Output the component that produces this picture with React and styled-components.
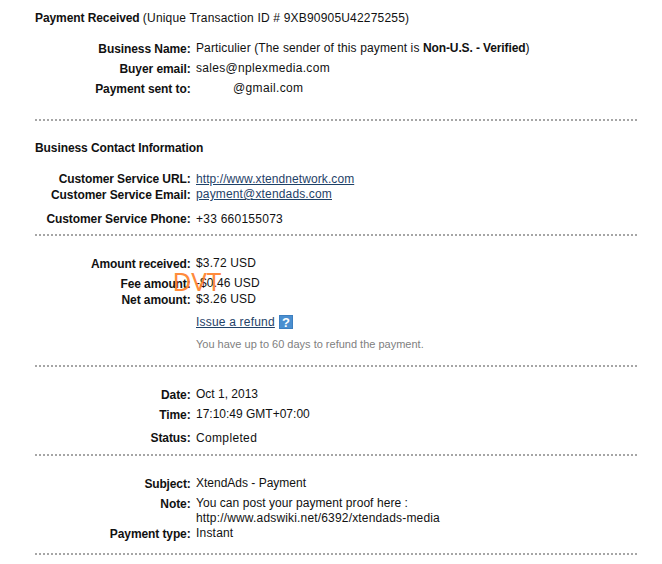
import styled, { createGlobalStyle } from 'styled-components';

const GlobalStyle = createGlobalStyle`
  body {
    margin: 0;
    background: #fff;
    color: #111;
    font: 12px/15px "Liberation Sans", Arial, sans-serif;
  }
`;

const Page = styled.main`
  display: flex;
  flex-direction: column;
  box-sizing: border-box;
  width: 662px;
  height: 564px;
  padding: 11px 25px 0 35px;
  overflow: hidden;
`;

const Strong = styled.b`
  letter-spacing: -0.12px;
`;

const Wide = styled.span`
  letter-spacing: 0.17px;
`;

const Heading = styled.h2`
  height: 15px;
  margin: ${(p) => p.$top || 0}px 0 0;
  font-size: 12px;
  font-weight: 700;
  letter-spacing: -0.09px;
`;

const Light = styled.span`
  font-weight: 400;
  letter-spacing: 0.19px;
`;

const Row = styled.div`
  display: grid;
  grid-template-columns: 155.6px 1fr;
  column-gap: 5.4px;
  align-items: start;
  margin-top: ${(p) => p.$top || 0}px;
  white-space: nowrap;
`;

const Label = styled.span`
  padding-top: ${(p) => p.$drop || 0}px;
  margin-bottom: -${(p) => p.$drop || 0}px;
  font-weight: 700;
  text-align: right;
  letter-spacing: ${(p) => p.$t ?? -0.08}px;
`;

const Value = styled.span`
  position: relative;
  letter-spacing: ${(p) => p.$t || 0}px;
  padding-left: ${(p) => p.$indent || 0}px;
`;

const Divider = styled.hr`
  width: 602px;
  height: 2px;
  margin: ${(p) => p.$top}px 0 0;
  border: 0;
  background: repeating-linear-gradient(to right, #a6a6a6 0 2px, transparent 2px 4px);
`;

const TextLink = styled.a`
  color: #1f4268;
  text-decoration: underline;
  text-underline-offset: 1px;
`;

const Refund = styled.div`
  display: flex;
  gap: 4px;
  height: 15px;
  margin: 8px 0 0 161px;
  letter-spacing: 0.2px;
`;

const Help = styled.span`
  width: 14px;
  height: 14px;
  background: #4a8fd0;
  box-shadow: inset 0 0 0 1px #3d7fc0;
  color: #fff;
  font-size: 13px;
  font-weight: 700;
  line-height: 15px;
  letter-spacing: 0;
  text-align: center;
`;

const Hint = styled.p`
  margin: 7px 0 0 161px;
  color: #808080;
  font-size: 11px;
`;

const Stamp = styled.span`
  position: absolute;
  left: -23.5px;
  top: -10px;
  color: #ff7f27;
  font: 26px/30px "Noto Sans", "Open Sans", sans-serif;
  letter-spacing: 0;
  opacity: 0.9;
`;

function Field({ label, top, drop, labelTrack, track, indent, children }) {
  return (
    <Row $top={top}>
      <Label $drop={drop} $t={labelTrack}>{label}</Label>
      <Value $t={track} $indent={indent}>{children}</Value>
    </Row>
  );
}

function App() {
  return (
    <>
      <GlobalStyle />
      <Page>
        <Heading>
          Payment Received <Light>(Unique Transaction ID # 9XB90905U42275255)</Light>
        </Heading>
        <Field label="Business Name:" top={15} drop={1} track={0.13}>
          Particulier (The sender of this payment is <Strong>Non-U.S. - Verified</Strong>)
        </Field>
        <Field label="Buyer email:" top={5} drop={1} track={0.32}>sales@nplexmedia.com</Field>
        <Field label="Payment sent to:" top={5} drop={1} track={0.36} indent={37}>@gmail.com</Field>
        <Divider $top={23} />

        <Heading $top={20}>Business Contact Information</Heading>
        <Field label="Customer Service URL:" top={16} labelTrack={-0.1} track={0.08}>
          <TextLink>http://www.xtendnetwork.com</TextLink>
        </Field>
        <Field label="Customer Service Email:" drop={1} track={0.155}>
          <TextLink>payment@xtendads.com</TextLink>
        </Field>
        <Field label="Customer Service Phone:" top={10} track={0.25}>+33 660155073</Field>
        <Divider $top={7} />

        <Field label="Amount received:" top={20} drop={1} labelTrack={-0.11} track={0.15}>
          $3.72 USD
        </Field>
        <Field label="Fee amount:" top={5} drop={1} labelTrack={-0.12} track={0.1}>
          -$0.46 USD
          <Stamp>DVT</Stamp>
        </Field>
        <Field label="Net amount:" top={1} drop={1} track={0.15}>$3.26 USD</Field>
        <Refund>
          <TextLink>Issue a refund</TextLink>
          <Help>?</Help>
        </Refund>
        <Hint>You have up to 60 days to refund the payment.</Hint>
        <Divider $top={13} />

        <Field label="Date:" top={20} drop={1}>Oct 1, 2013</Field>
        <Field label="Time:" top={5} drop={1}>17:10:49 GMT+07:00</Field>
        <Field label="Status:" top={9} track={0.35}>Completed</Field>
        <Divider $top={8} />

        <Field label="Subject:" top={20} drop={1} labelTrack={-0.14}>XtendAds - Payment</Field>
        <Field label="Note:" top={5} drop={1} track={0.06}>
          You can post your payment proof here :<br />
          <Wide>http://www.adswiki.net/6392/xtendads-media</Wide>
        </Field>
        <Field label="Payment type:" drop={1} labelTrack={-0.1} track={0.2}>Instant</Field>
        <Divider $top={12} />
      </Page>
    </>
  );
}

export default App;
